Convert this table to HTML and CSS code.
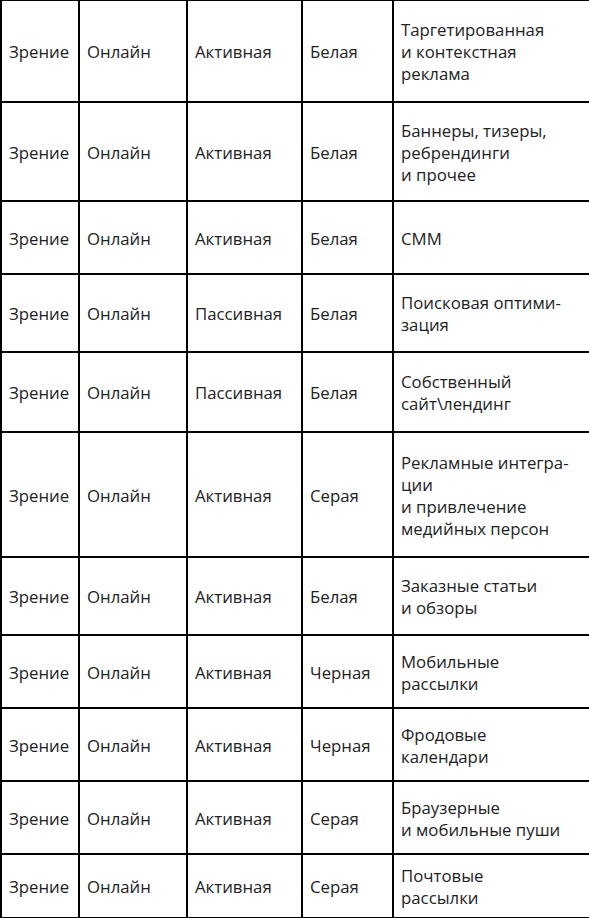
FILE: index.html
```html
<!DOCTYPE html>
<html lang="ru">
<head>
<meta charset="utf-8">
<title>Таблица</title>
<link rel="stylesheet" href="styles.css">
</head>
<body>
<table class="grid">
  <colgroup>
    <col class="c1"><col class="c2"><col class="c3"><col class="c4"><col class="c5">
  </colgroup>
  <tbody>
    <tr class="r1"><td>Зрение</td><td>Онлайн</td><td>Активная</td><td>Белая</td><td>Таргетированная<br>и контекстная<br>реклама</td></tr>
    <tr class="r2"><td>Зрение</td><td>Онлайн</td><td>Активная</td><td>Белая</td><td>Баннеры, тизеры,<br>ребрендинги<br>и прочее</td></tr>
    <tr class="r3"><td>Зрение</td><td>Онлайн</td><td>Активная</td><td>Белая</td><td>СММ</td></tr>
    <tr class="r4"><td>Зрение</td><td>Онлайн</td><td>Пассивная</td><td>Белая</td><td>Поисковая оптими-<br>зация</td></tr>
    <tr class="r5"><td>Зрение</td><td>Онлайн</td><td>Пассивная</td><td>Белая</td><td>Собственный<br>сайт\лендинг</td></tr>
    <tr class="r6"><td>Зрение</td><td>Онлайн</td><td>Активная</td><td>Серая</td><td>Рекламные интегра-<br>ции<br>и привлечение<br>медийных персон</td></tr>
    <tr class="r7"><td>Зрение</td><td>Онлайн</td><td>Активная</td><td>Белая</td><td>Заказные статьи<br>и обзоры</td></tr>
    <tr class="r8"><td>Зрение</td><td>Онлайн</td><td>Активная</td><td>Черная</td><td>Мобильные<br>рассылки</td></tr>
    <tr class="r9"><td>Зрение</td><td>Онлайн</td><td>Активная</td><td>Черная</td><td>Фродовые<br>календари</td></tr>
    <tr class="r10"><td>Зрение</td><td>Онлайн</td><td>Активная</td><td>Серая</td><td>Браузерные<br>и мобильные пуши</td></tr>
    <tr class="r11"><td>Зрение</td><td>Онлайн</td><td>Активная</td><td>Серая</td><td>Почтовые<br>рассылки</td></tr>
  </tbody>
</table>
</body>
</html>
```
FILE: styles.css
```css
html, body {
  margin: 0;
  padding: 0;
  background: #fff;
}
body {
  width: 589px;
  height: 918px;
  overflow: hidden;
}
.grid {
  width: 589px;
  table-layout: fixed;
  border-collapse: collapse;
  font-family: "Open Sans", "Noto Sans", sans-serif;
  font-size: 16.8px;
  line-height: 22px;
  color: #222;
}
.c1 { width: 78px; }
.c2 { width: 108px; }
.c3 { width: 115px; }
.c4 { width: 91px; }
.c5 { width: 197px; }
.grid td {
  border: 2px solid #000;
  padding: 3px 2px 0 7px;
  vertical-align: middle;
  white-space: nowrap;
}
.grid tr:first-child td { border-top-width: 1px; }
.r1 { height: 101px; }
.r2 { height: 99px; }
.r3 { height: 73px; }
.r4 { height: 78px; }
.r5 { height: 80px; }
.r6 { height: 125px; }
.r7 { height: 78px; }
.r8 { height: 73px; }
.r9 { height: 73px; }
.r10 { height: 73px; }
.r11 { height: 64px; }
```
